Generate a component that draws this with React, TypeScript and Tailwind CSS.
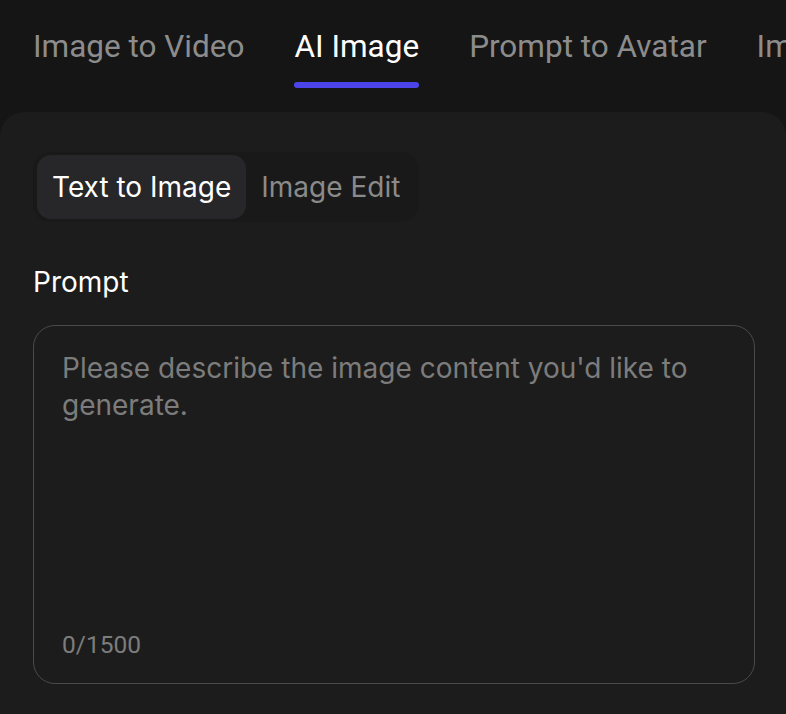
import { useState } from 'react';

const tabs = ['Image to Video', 'AI Image', 'Prompt to Avatar', 'Image to Image'];

export default function App() {
  const [mode, setMode] = useState<'text' | 'edit'>('text');

  return (
    <div className="h-[714px] w-[786px] overflow-hidden bg-[#151515] font-['Inter',sans-serif]">
      <div className="flex h-[112px] gap-[50px] overflow-hidden whitespace-nowrap pl-[33px] pt-[28px]">
        {tabs.map((t) => (
          <div key={t} className="flex shrink-0 flex-col items-center">
            <span
              className={`font-['Roboto',sans-serif] text-[31.5px] leading-[38px] ${
                t === 'AI Image' ? 'text-white' : 'text-[#8c8c8c]'
              }`}
            >
              {t}
            </span>
            {t === 'AI Image' && <div className="mt-[16px] h-[6px] w-full rounded-full bg-[#4b44e8]" />}
          </div>
        ))}
      </div>

      <div className="h-[620px] rounded-t-[24px] bg-[#1c1c1c] px-[33px] pt-[40px]">
        <div className="inline-flex h-[70px] items-center rounded-[18px] bg-[#191919] p-[4px]">
          <button
            onClick={() => setMode('text')}
            className={`h-[64px] rounded-[14px] px-[15px] text-[28px] ${
              mode === 'text' ? 'bg-[#27272a] text-white' : 'text-[#8a8a8a]'
            }`}
          >
            Text to Image
          </button>
          <button
            onClick={() => setMode('edit')}
            className={`h-[64px] rounded-[14px] px-[15px] text-[28px] ${
              mode === 'edit' ? 'bg-[#27272a] text-white' : 'text-[#8a8a8a]'
            }`}
          >
            Image Edit
          </button>
        </div>

        <div className="mt-[44px] text-[28px] leading-[32px] text-white">Prompt</div>

        <div className="mt-[27px] flex h-[359px] w-[722px] flex-col justify-between rounded-[22px] border-[1.5px] border-[#4a4a4a] px-[28px] pb-[24px] pt-[24px]">
          <p className="text-[28px] leading-[37px] text-[#7c7c7c]">
            Please describe the image content you'd like to generate.
          </p>
          <span className="font-['Roboto',sans-serif] text-[24.5px] leading-[28px] text-[#7c7c7c]">0/1500</span>
        </div>
      </div>
    </div>
  );
}
